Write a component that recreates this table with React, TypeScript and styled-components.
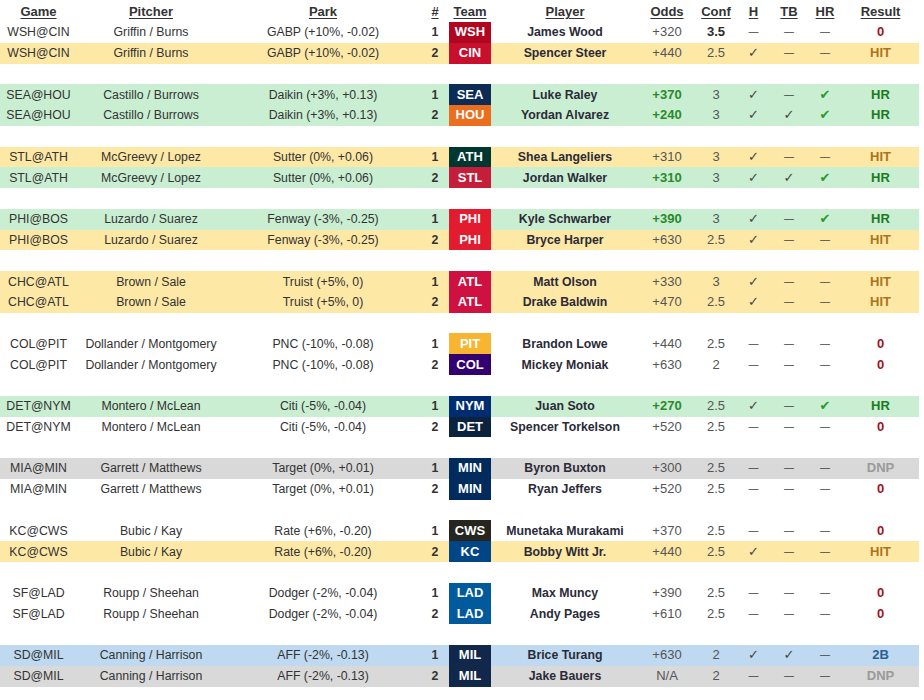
import React from "react";
import styled, { createGlobalStyle } from "styled-components";

const GlobalStyle = createGlobalStyle`
  html, body { margin: 0; padding: 0; background: #ffffff; }
  body { font-family: "Liberation Sans", Arial, Helvetica, sans-serif; }
`;

type Tone = "none" | "yellow" | "green" | "grey" | "blue";
type Result = "0" | "HIT" | "HR" | "DNP" | "2B";

interface Pick {
  n: number;
  team: string;
  player: string;
  odds: string;
  oddsHot?: boolean;
  conf: string;
  confBold?: boolean;
  h: boolean;
  tb: boolean;
  hr: boolean;
  result: Result;
  tone: Tone;
}

interface Game {
  game: string;
  pitcher: string;
  park: string;
  picks: Pick[];
}

const TEAM_COLORS: Record<string, string> = {
  WSH: "#b0061f",
  CIN: "#c8102e",
  SEA: "#0c2c56",
  HOU: "#eb6e1f",
  ATH: "#003831",
  STL: "#c41e3a",
  PHI: "#e31b2e",
  ATL: "#ce1141",
  PIT: "#f7b531",
  COL: "#33006f",
  NYM: "#002d72",
  DET: "#0c2340",
  MIN: "#002b5c",
  CWS: "#27251f",
  KC: "#004687",
  LAD: "#005a9c",
  MIL: "#12284b",
};

const TONES: Record<Tone, string> = {
  none: "transparent",
  yellow: "#fde8a6",
  green: "#c9eed2",
  grey: "#d9d9d9",
  blue: "#bed9f0",
};

const RESULT_COLORS: Record<Result, string> = {
  "0": "#a1111d",
  HIT: "#ad751a",
  HR: "#1d7a22",
  DNP: "#9a9a9a",
  "2B": "#2d5f95",
};

const games: Game[] = [
  {
    game: "WSH@CIN", pitcher: "Griffin / Burns", park: "GABP (+10%, -0.02)",
    picks: [
      { n: 1, team: "WSH", player: "James Wood", odds: "+320", conf: "3.5", confBold: true, h: false, tb: false, hr: false, result: "0", tone: "none" },
      { n: 2, team: "CIN", player: "Spencer Steer", odds: "+440", conf: "2.5", h: true, tb: false, hr: false, result: "HIT", tone: "yellow" },
    ],
  },
  {
    game: "SEA@HOU", pitcher: "Castillo / Burrows", park: "Daikin (+3%, +0.13)",
    picks: [
      { n: 1, team: "SEA", player: "Luke Raley", odds: "+370", oddsHot: true, conf: "3", h: true, tb: false, hr: true, result: "HR", tone: "green" },
      { n: 2, team: "HOU", player: "Yordan Alvarez", odds: "+240", oddsHot: true, conf: "3", h: true, tb: true, hr: true, result: "HR", tone: "green" },
    ],
  },
  {
    game: "STL@ATH", pitcher: "McGreevy / Lopez", park: "Sutter (0%, +0.06)",
    picks: [
      { n: 1, team: "ATH", player: "Shea Langeliers", odds: "+310", conf: "3", h: true, tb: false, hr: false, result: "HIT", tone: "yellow" },
      { n: 2, team: "STL", player: "Jordan Walker", odds: "+310", oddsHot: true, conf: "3", h: true, tb: true, hr: true, result: "HR", tone: "green" },
    ],
  },
  {
    game: "PHI@BOS", pitcher: "Luzardo / Suarez", park: "Fenway (-3%, -0.25)",
    picks: [
      { n: 1, team: "PHI", player: "Kyle Schwarber", odds: "+390", oddsHot: true, conf: "3", h: true, tb: false, hr: true, result: "HR", tone: "green" },
      { n: 2, team: "PHI", player: "Bryce Harper", odds: "+630", conf: "2.5", h: true, tb: false, hr: false, result: "HIT", tone: "yellow" },
    ],
  },
  {
    game: "CHC@ATL", pitcher: "Brown / Sale", park: "Truist (+5%, 0)",
    picks: [
      { n: 1, team: "ATL", player: "Matt Olson", odds: "+330", conf: "3", h: true, tb: false, hr: false, result: "HIT", tone: "yellow" },
      { n: 2, team: "ATL", player: "Drake Baldwin", odds: "+470", conf: "2.5", h: true, tb: false, hr: false, result: "HIT", tone: "yellow" },
    ],
  },
  {
    game: "COL@PIT", pitcher: "Dollander / Montgomery", park: "PNC (-10%, -0.08)",
    picks: [
      { n: 1, team: "PIT", player: "Brandon Lowe", odds: "+440", conf: "2.5", h: false, tb: false, hr: false, result: "0", tone: "none" },
      { n: 2, team: "COL", player: "Mickey Moniak", odds: "+630", conf: "2", h: false, tb: false, hr: false, result: "0", tone: "none" },
    ],
  },
  {
    game: "DET@NYM", pitcher: "Montero / McLean", park: "Citi (-5%, -0.04)",
    picks: [
      { n: 1, team: "NYM", player: "Juan Soto", odds: "+270", oddsHot: true, conf: "2.5", h: true, tb: false, hr: true, result: "HR", tone: "green" },
      { n: 2, team: "DET", player: "Spencer Torkelson", odds: "+520", conf: "2.5", h: false, tb: false, hr: false, result: "0", tone: "none" },
    ],
  },
  {
    game: "MIA@MIN", pitcher: "Garrett / Matthews", park: "Target (0%, +0.01)",
    picks: [
      { n: 1, team: "MIN", player: "Byron Buxton", odds: "+300", conf: "2.5", h: false, tb: false, hr: false, result: "DNP", tone: "grey" },
      { n: 2, team: "MIN", player: "Ryan Jeffers", odds: "+520", conf: "2.5", h: false, tb: false, hr: false, result: "0", tone: "none" },
    ],
  },
  {
    game: "KC@CWS", pitcher: "Bubic / Kay", park: "Rate (+6%, -0.20)",
    picks: [
      { n: 1, team: "CWS", player: "Munetaka Murakami", odds: "+370", conf: "2.5", h: false, tb: false, hr: false, result: "0", tone: "none" },
      { n: 2, team: "KC", player: "Bobby Witt Jr.", odds: "+440", conf: "2.5", h: true, tb: false, hr: false, result: "HIT", tone: "yellow" },
    ],
  },
  {
    game: "SF@LAD", pitcher: "Roupp / Sheehan", park: "Dodger (-2%, -0.04)",
    picks: [
      { n: 1, team: "LAD", player: "Max Muncy", odds: "+390", conf: "2.5", h: false, tb: false, hr: false, result: "0", tone: "none" },
      { n: 2, team: "LAD", player: "Andy Pages", odds: "+610", conf: "2.5", h: false, tb: false, hr: false, result: "0", tone: "none" },
    ],
  },
  {
    game: "SD@MIL", pitcher: "Canning / Harrison", park: "AFF (-2%, -0.13)",
    picks: [
      { n: 1, team: "MIL", player: "Brice Turang", odds: "+630", conf: "2", h: true, tb: true, hr: false, result: "2B", tone: "blue" },
      { n: 2, team: "MIL", player: "Jake Bauers", odds: "N/A", conf: "2", h: false, tb: false, hr: false, result: "DNP", tone: "grey" },
    ],
  },
];

const COLS = [77, 148, 196, 28, 42, 148, 56, 42, 33, 38, 34, 77];
const HEADERS = ["Game", "Pitcher", "Park", "#", "Team", "Player", "Odds", "Conf", "H", "TB", "HR", "Result"];

const Page = styled.div`
  width: 919px;
  padding-top: 1px;
`;

const Table = styled.table`
  width: 919px;
  table-layout: fixed;
  border-collapse: collapse;
  border-spacing: 0;
  font-size: 12.3px;
  color: #333333;
`;

const HeadCell = styled.th`
  height: 21px;
  padding: 0;
  text-align: center;
  vertical-align: middle;
  font-size: 13px;
  font-weight: bold;
  color: #333333;
  text-decoration: underline;
  text-underline-offset: 2px;
`;

const Row = styled.tr<{ $tone: Tone }>`
  height: 20.78px;
  background: ${(p) => TONES[p.$tone]};
`;

const SpacerRow = styled.tr`
  height: 20.78px;
`;

const Cell = styled.td`
  padding: 0;
  text-align: center;
  vertical-align: middle;
  white-space: nowrap;
  line-height: 14px;
`;

const NumCell = styled(Cell)`
  font-weight: bold;
`;

const TeamCell = styled(Cell)<{ $color: string }>`
  background: ${(p) => p.$color};
  color: #ffffff;
  font-weight: bold;
  font-size: 13px;
`;

const PlayerCell = styled(Cell)`
  font-weight: bold;
  color: #2b2b38;
`;

const OddsCell = styled(Cell)<{ $hot?: boolean }>`
  color: ${(p) => (p.$hot ? "#2a8a2a" : "#555555")};
  font-weight: ${(p) => (p.$hot ? "bold" : "normal")};
  font-size: 13px;
`;

const ConfCell = styled(Cell)<{ $bold?: boolean }>`
  color: ${(p) => (p.$bold ? "#2b2b2b" : "#555555")};
  font-weight: ${(p) => (p.$bold ? "bold" : "normal")};
  font-size: 13px;
`;

const MarkCell = styled(Cell)<{ $green?: boolean; $on: boolean }>`
  color: ${(p) => (p.$green && p.$on ? "#2a9a2a" : "#444444")};
  font-family: "DejaVu Sans", "Liberation Sans", sans-serif;
  font-size: ${(p) => (p.$on ? "13px" : "11px")};
`;

const ResultCell = styled(Cell)<{ $result: Result }>`
  color: ${(p) => RESULT_COLORS[p.$result]};
  font-weight: bold;
  font-size: 13px;
`;

const Mark: React.FC<{ on: boolean; green?: boolean }> = ({ on, green }) => (
  <MarkCell $on={on} $green={green}>{on ? (green ? "✔" : "✓") : "—"}</MarkCell>
);

export default function App() {
  return (
    <Page>
      <GlobalStyle />
      <Table>
        <colgroup>
          {COLS.map((w, i) => (
            <col key={i} style={{ width: w }} />
          ))}
        </colgroup>
        <thead>
          <tr>
            {HEADERS.map((h) => (
              <HeadCell key={h}>{h}</HeadCell>
            ))}
          </tr>
        </thead>
        <tbody>
          {games.map((g, gi) => (
            <React.Fragment key={g.game}>
              {gi > 0 && (
                <SpacerRow>
                  <td colSpan={12} />
                </SpacerRow>
              )}
              {g.picks.map((p) => (
                <Row key={p.n} $tone={p.tone}>
                  <Cell>{g.game}</Cell>
                  <Cell>{g.pitcher}</Cell>
                  <Cell>{g.park}</Cell>
                  <NumCell>{p.n}</NumCell>
                  <TeamCell $color={TEAM_COLORS[p.team]}>{p.team}</TeamCell>
                  <PlayerCell>{p.player}</PlayerCell>
                  <OddsCell $hot={p.oddsHot}>{p.odds}</OddsCell>
                  <ConfCell $bold={p.confBold}>{p.conf}</ConfCell>
                  <Mark on={p.h} />
                  <Mark on={p.tb} />
                  <Mark on={p.hr} green />
                  <ResultCell $result={p.result}>{p.result}</ResultCell>
                </Row>
              ))}
            </React.Fragment>
          ))}
        </tbody>
      </Table>
    </Page>
  );
}
